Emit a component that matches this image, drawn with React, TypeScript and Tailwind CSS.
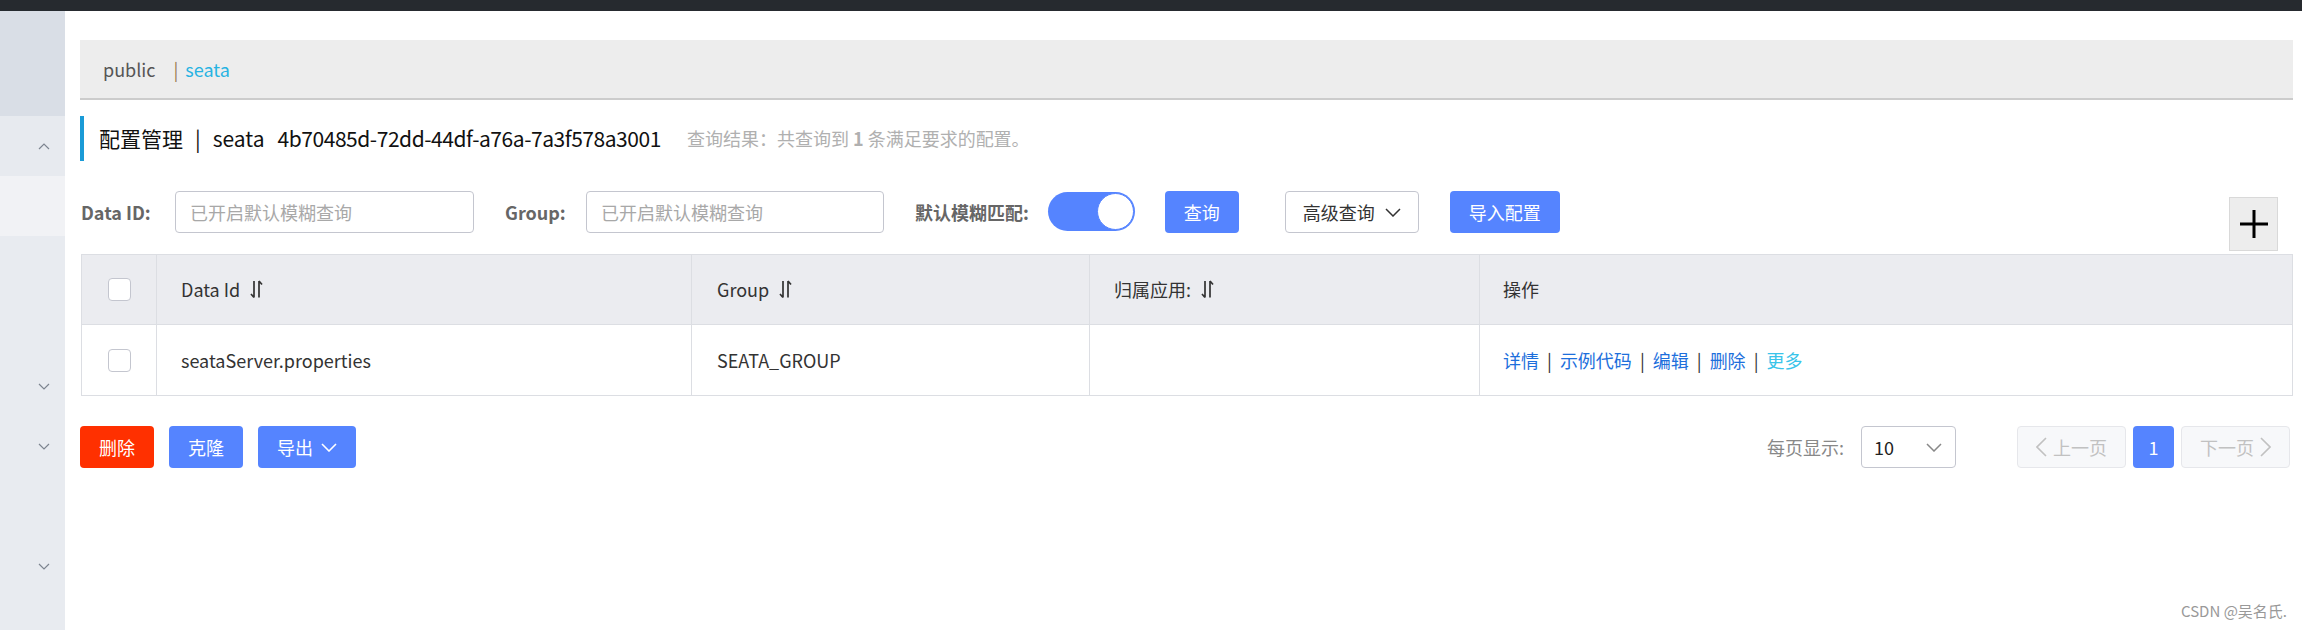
import React from "react";

const ChevronDown = ({ w = 16, h = 9, color = "#333", sw = 1.5 }: { w?: number; h?: number; color?: string; sw?: number }) => (
  <svg width={w} height={h} viewBox={`0 0 ${w} ${h}`} fill="none">
    <polyline points={`1,1 ${w / 2},${h - 1} ${w - 1},1`} stroke={color} strokeWidth={sw} />
  </svg>
);

const ChevronUp = ({ w = 12, h = 7, color = "#7d8590", sw = 1.2 }: { w?: number; h?: number; color?: string; sw?: number }) => (
  <svg width={w} height={h} viewBox={`0 0 ${w} ${h}`} fill="none">
    <polyline points={`1,${h - 1} ${w / 2},1 ${w - 1},${h - 1}`} stroke={color} strokeWidth={sw} />
  </svg>
);

const ChevronLR = ({ dir, color }: { dir: "l" | "r"; color: string }) => (
  <svg width="11" height="20" viewBox="0 0 11 20" fill="none">
    {dir === "l" ? (
      <polyline points="10,1 1,10 10,19" stroke={color} strokeWidth="1.6" />
    ) : (
      <polyline points="1,1 10,10 1,19" stroke={color} strokeWidth="1.6" />
    )}
  </svg>
);

const SortIcon = () => (
  <svg width="13" height="19" viewBox="0 0 13 19" fill="none" className="ml-[10px]">
    <path d="M4 1V17.5M4 17.5L1 14" stroke="#333" strokeWidth="1.7" />
    <path d="M9 17.5V1M9 1L12 4.5" stroke="#333" strokeWidth="1.7" />
  </svg>
);

const Checkbox = () => (
  <div className="w-[23px] h-[23px] rounded-[4px] border border-[#c4c6cf] bg-white" />
);

const Sidebar = () => (
  <div className="w-[65px] shrink-0 flex flex-col bg-[#e8ebf0]">
    <div className="h-[105px] bg-[#d9dee6]" />
    <div className="h-[60px] bg-[#e7eaef] flex items-center justify-end pr-[15px]">
      <ChevronUp />
    </div>
    <div className="h-[60px] bg-[#f1f2f5]" />
    <div className="h-[60px]" />
    <div className="h-[60px]" />
    <div className="h-[60px] flex items-center justify-end pr-[15px]">
      <ChevronDown w={12} h={7} color="#7d8590" sw={1.2} />
    </div>
    <div className="h-[60px] flex items-center justify-end pr-[15px]">
      <ChevronDown w={12} h={7} color="#7d8590" sw={1.2} />
    </div>
    <div className="h-[60px]" />
    <div className="h-[60px] flex items-center justify-end pr-[15px]">
      <ChevronDown w={12} h={7} color="#7d8590" sw={1.2} />
    </div>
    <div className="flex-1" />
  </div>
);

const Sep = () => <span className="mx-[8px] text-[#333]">|</span>;

export default function App() {
  return (
    <div className="relative w-[2302px] h-[630px] overflow-hidden bg-white font-['Noto_Sans_CJK_SC','Noto_Sans',sans-serif] text-[18px] text-[#333]">
      <div className="h-[11px] bg-[#262a2f]" />
      <div className="flex h-[619px]">
        <Sidebar />
        <div className="flex-1 pl-[15px] pr-[9px]">
          {/* breadcrumb */}
          <div className="mt-[29px] h-[60px] bg-[#ededed] border-b-2 border-[#cccccc] flex items-center pl-[23px] text-[18px]">
            <span className="text-[#555]">public</span>
            <span className="ml-[18px] text-[#9a7a50]">|</span>
            <span className="ml-[7px] text-[#27b3e2]">seata</span>
          </div>
          {/* title */}
          <div className="mt-[16px] h-[45px] border-l-4 border-[#1a9bd7] flex items-center pl-[15px]">
            <span className="text-[21px] text-[#111]">配置管理</span>
            <span className="text-[21px] text-[#111] mx-[12px]">|</span>
            <span className="text-[21px] text-[#111]">seata</span>
            <span className="text-[21px] text-[#111] ml-[13px] tracking-[-0.45px]">4b70485d-72dd-44df-a76a-7a3f578a3001</span>
            <span className="ml-[26px] text-[18px] text-[#b0b0b0]">
              查询结果：共查询到 <b className="font-bold">1</b> 条满足要求的配置。
            </span>
          </div>
          {/* toolbar */}
          <div className="mt-[30px] flex items-start pl-[1px]">
            <div className="h-[42px] flex items-center font-bold text-[#666] w-[94px]">Data ID:</div>
            <div className="w-[299px] h-[42px] border border-[#c4c6cf] rounded-[4px] flex items-center pl-[14px] text-[#a8a8a8]">
              已开启默认模糊查询
            </div>
            <div className="ml-[31px] h-[42px] flex items-center font-bold text-[#666] w-[81px]">Group:</div>
            <div className="w-[298px] h-[42px] border border-[#c4c6cf] rounded-[4px] flex items-center pl-[14px] text-[#a8a8a8]">
              已开启默认模糊查询
            </div>
            <div className="ml-[31px] h-[42px] flex items-center font-bold text-[#666]">默认模糊匹配:</div>
            <div className="ml-[19px] mt-[1px] w-[87px] h-[39px] rounded-full bg-[#5584ff] flex items-center justify-end pr-[1px]">
              <div className="w-[37px] h-[37px] rounded-full bg-white border border-[#5584ff]" />
            </div>
            <div className="ml-[30px] w-[74px] h-[42px] rounded-[4px] bg-[#5584ff] text-white flex items-center justify-center">
              查询
            </div>
            <div className="ml-[46px] w-[134px] h-[42px] rounded-[4px] border border-[#c4c6cf] bg-white flex items-center justify-center gap-[10px]">
              <span>高级查询</span>
              <ChevronDown w={16} h={9} color="#333" sw={1.5} />
            </div>
            <div className="ml-[31px] w-[110px] h-[42px] rounded-[4px] bg-[#5584ff] text-white flex items-center justify-center">
              导入配置
            </div>
            <div className="ml-auto mr-[15px] mt-[6px] w-[49px] h-[54px] bg-[#ededed] border border-[#d9d9d9] flex items-center justify-center">
              <svg width="30" height="30" viewBox="0 0 30 30">
                <path d="M15 1V29M1 15H29" stroke="#000" strokeWidth="3" />
              </svg>
            </div>
          </div>
          {/* table */}
          <div className="mt-[3px] ml-[1px] border border-[#dcdee3]">
            <div className="grid grid-cols-[75px_535px_398px_390px_1fr] h-[70px] bg-[#ebecf0] border-b border-[#dcdee3]">
              <div className="flex items-center justify-center border-r border-[#dcdee3]">
                <Checkbox />
              </div>
              <div className="flex items-center pl-[24px] border-r border-[#dcdee3]">
                Data Id <SortIcon />
              </div>
              <div className="flex items-center pl-[25px] border-r border-[#dcdee3]">
                Group <SortIcon />
              </div>
              <div className="flex items-center pl-[24px] border-r border-[#dcdee3]">
                归属应用: <SortIcon />
              </div>
              <div className="flex items-center pl-[23px]">操作</div>
            </div>
            <div className="grid grid-cols-[75px_535px_398px_390px_1fr] h-[70px] bg-white">
              <div className="flex items-center justify-center border-r border-[#dcdee3]">
                <Checkbox />
              </div>
              <div className="flex items-center pl-[24px] border-r border-[#dcdee3]">seataServer.properties</div>
              <div className="flex items-center pl-[25px] border-r border-[#dcdee3]">SEATA_GROUP</div>
              <div className="border-r border-[#dcdee3]" />
              <div className="flex items-center pl-[23px]">
                <span className="text-[#1d6fdc]">详情</span>
                <Sep />
                <span className="text-[#1d6fdc]">示例代码</span>
                <Sep />
                <span className="text-[#1d6fdc]">编辑</span>
                <Sep />
                <span className="text-[#1d6fdc]">删除</span>
                <Sep />
                <span className="text-[#39c4ea]">更多</span>
              </div>
            </div>
          </div>
          {/* bottom row */}
          <div className="mt-[30px] flex items-center pr-[3px]">
            <div className="w-[74px] h-[42px] rounded-[4px] bg-[#ff3000] text-white flex items-center justify-center">删除</div>
            <div className="ml-[15px] w-[74px] h-[42px] rounded-[4px] bg-[#5584ff] text-white flex items-center justify-center">克隆</div>
            <div className="ml-[15px] w-[98px] h-[42px] rounded-[4px] bg-[#5584ff] text-white flex items-center justify-center gap-[8px]">
              <span>导出</span>
              <ChevronDown w={16} h={9} color="#fff" sw={1.6} />
            </div>
            <div className="ml-auto flex items-center">
              <span className="text-[#888]">每页显示:</span>
              <div className="ml-[17px] w-[95px] h-[42px] rounded-[4px] border border-[#c4c6cf] flex items-center justify-between pl-[12px] pr-[13px]">
                <span className="text-[#222]">10</span>
                <ChevronDown w={16} h={9} color="#888" sw={1.5} />
              </div>
              <div className="ml-[61px] w-[109px] h-[42px] rounded-[4px] border border-[#e6e7eb] bg-[#f7f8fa] flex items-center justify-center gap-[6px] text-[#c1c1c1]">
                <ChevronLR dir="l" color="#c1c1c1" />
                <span>上一页</span>
              </div>
              <div className="ml-[7px] w-[41px] h-[42px] rounded-[4px] bg-[#5584ff] text-white flex items-center justify-center">1</div>
              <div className="ml-[7px] w-[109px] h-[42px] rounded-[4px] border border-[#e6e7eb] bg-[#f7f8fa] flex items-center justify-center gap-[6px] text-[#c1c1c1]">
                <span>下一页</span>
                <ChevronLR dir="r" color="#c1c1c1" />
              </div>
            </div>
          </div>
        </div>
      </div>
      <div className="absolute right-[15px] bottom-[8px] text-[15px] text-[#999]">CSDN @吴名氏.</div>
    </div>
  );
}
